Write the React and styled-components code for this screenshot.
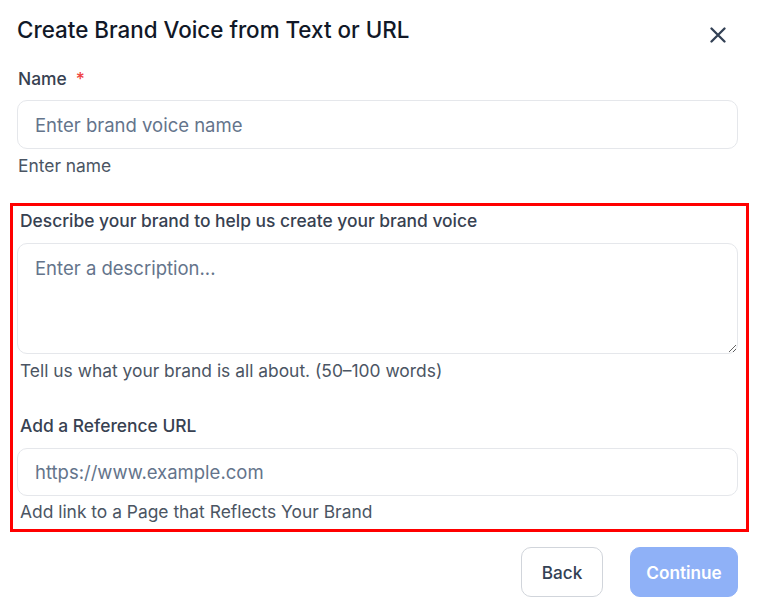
import React from "react";
import styled, { createGlobalStyle } from "styled-components";

const GlobalStyle = createGlobalStyle`
    html, body {
        margin: 0;
        padding: 0;
        background: #ffffff;
        font-family: Inter, "Noto Sans", sans-serif;
    }
    * {
        box-sizing: border-box;
    }
`;

const Dialog = styled.div`
    width: 758px;
    padding: 16px 20px 0px 17px;
    display: flex;
    flex-direction: column;
`;

const Header = styled.div`
    display: flex;
    justify-content: space-between;
    align-items: flex-start;
`;

const Title = styled.h2`
    margin: 0;
    font-size: 22.4px;
    line-height: 28px;
    font-weight: 500;
    color: #111827;
`;

const CloseButton = styled.button`
    border: none;
    background: transparent;
    padding: 0;
    margin: 11px 12px 0 0;
    width: 16px;
    height: 16px;
    display: flex;
    cursor: pointer;
    color: #334155;
`;

const Label = styled.label`
    display: block;
    font-size: 17.4px;
    line-height: 24px;
    font-weight: 500;
    color: #374151;
    padding-left: ${({ inset }) => (inset ? "3px" : "1px")};
    margin-top: ${({ top }) => top || 0}px;
`;

const Required = styled.span`
    color: #ef4444;
    margin-left: 9px;
`;

const Input = styled.input`
    display: block;
    width: 100%;
    height: ${({ h }) => h || 49}px;
    margin-top: ${({ top }) => top || 0}px;
    padding: 0 17px;
    border: 1px solid #e5e7eb;
    border-radius: 10px;
    font-family: inherit;
    font-size: 18.5px;
    color: #111827;
    outline: none;
    background: #ffffff;

    &::placeholder {
        color: #64748b;
    }
`;

const TextArea = styled.textarea`
    display: block;
    width: 100%;
    height: 111px;
    margin-top: 10px;
    padding: 10px 17px;
    border: 1px solid #e5e7eb;
    border-radius: 10px;
    font-family: inherit;
    font-size: 18.5px;
    line-height: 28px;
    color: #111827;
    outline: none;
    resize: vertical;

    &::placeholder {
        color: #64748b;
    }
`;

const Hint = styled.p`
    margin: ${({ top }) => top || 3}px 0 0 0;
    font-size: 17.4px;
    line-height: 24px;
    color: #4b5563;
    padding-left: ${({ inset }) => (inset ? "3px" : "1px")};
`;

const Highlight = styled.section`
    margin: 25px -11px 0 -7px;
    border: 3px solid #ff0000;
    padding: 3px 8px 5px 4px;
    display: flex;
    flex-direction: column;
`;

const Footer = styled.div`
    display: flex;
    justify-content: flex-end;
    gap: 27px;
    margin-top: 15px;
`;

const Button = styled.button`
    height: 50px;
    width: ${({ w }) => w}px;
    padding: 0;
    border-radius: 10px;
    font-family: inherit;
    font-size: 17.2px;
    font-weight: 500;
    cursor: pointer;
    border: 1px solid #d1d5db;
    background: #ffffff;
    color: #334155;
    ${({ primary }) => primary && `
        border-color: #8fb1f7;
        background: #8fb1f7;
        color: #ffffff;
        font-weight: 600;
        cursor: not-allowed;
    `}
`;

const CloseIcon = () => (
    <svg width="16" height="16" viewBox="0 0 16 16" fill="none">
        <path d="M1.5 1.5L14.5 14.5M14.5 1.5L1.5 14.5" stroke="currentColor" strokeWidth="2.3" strokeLinecap="round" />
    </svg>
);

const App = () => {
    return (
        <>
            <GlobalStyle />
            <Dialog>
                <Header>
                    <Title>Create Brand Voice from Text or URL</Title>
                    <CloseButton aria-label="Close">
                        <CloseIcon />
                    </CloseButton>
                </Header>

                <Label top={23}>
                    Name<Required>*</Required>
                </Label>
                <Input top={9} placeholder="Enter brand voice name" />
                <Hint top={5}>Enter name</Hint>

                <Highlight>
                    <Label inset>Describe your brand to help us create your brand voice</Label>
                    <TextArea placeholder="Enter a description..." />
                    <Hint inset top={5}>Tell us what your brand is all about. (50–100 words)</Hint>

                    <Label inset top={31}>Add a Reference URL</Label>
                    <Input top={10} h={48} placeholder="https://www.example.com" />
                    <Hint inset top={4}>Add link to a Page that Reflects Your Brand</Hint>
                </Highlight>

                <Footer>
                    <Button w={82}>Back</Button>
                    <Button w={108} primary disabled>Continue</Button>
                </Footer>
            </Dialog>
        </>
    );
};

export default App;
